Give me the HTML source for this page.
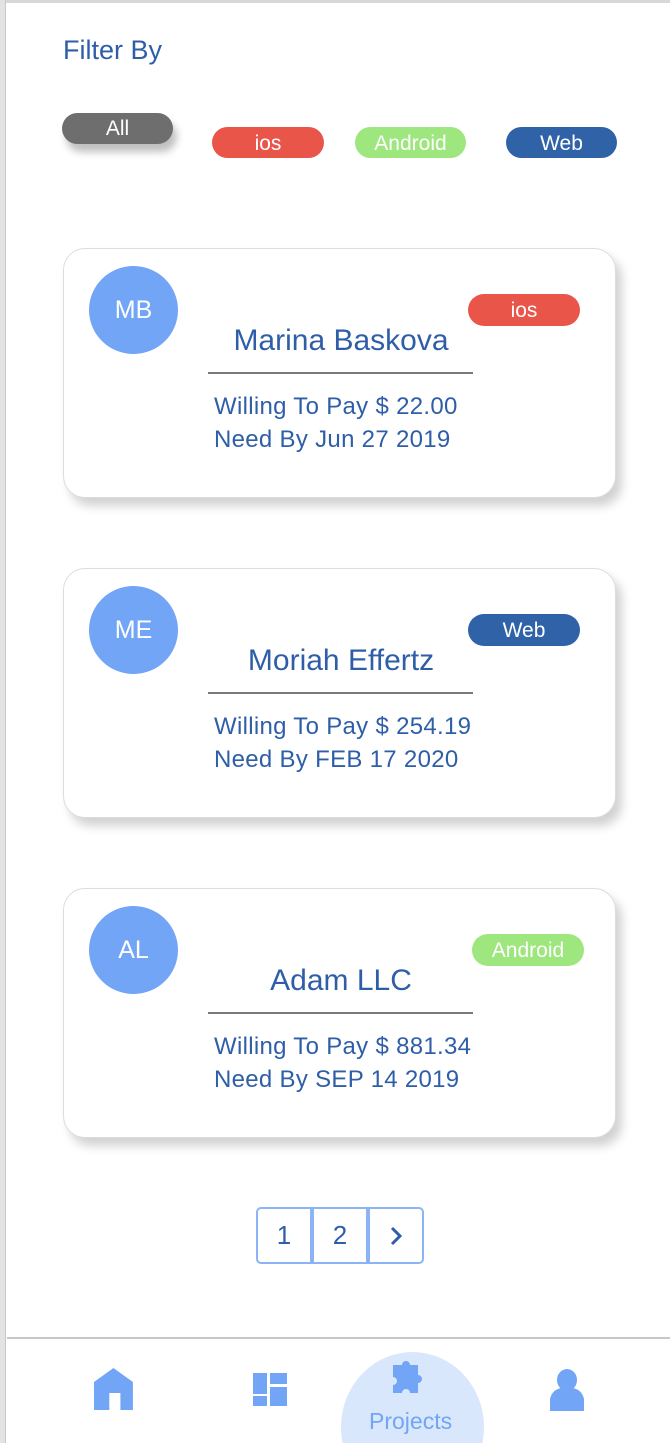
<!DOCTYPE html>
<html style="overflow:hidden;height:1443px"><head><style>
*{margin:0;padding:0;box-sizing:border-box}
body{width:670px;height:1443px;position:relative;background:#fff;font-family:"Liberation Sans",sans-serif;overflow:hidden}
.lb{position:absolute;left:0;top:0;width:6px;height:1443px;background:#e3e3e3;border-right:1px solid #c8c8c8}
.tb{position:absolute;left:0;top:0;width:670px;height:3px;background:#d8d8d8}
.t{position:absolute;white-space:nowrap}
.pill{position:absolute;border-radius:16px;color:#fff;text-align:center;font-size:21px}
.card{position:absolute;left:63px;width:553px;height:250px;border:1px solid #ddd;border-radius:22px;background:#fff;box-shadow:6px 8px 10px rgba(0,0,0,.18)}
.av{position:absolute;left:25px;top:17px;width:89px;height:88px;border-radius:50%;background:#72a5f5;color:#fff;font-size:25px;text-align:center;line-height:88px}
.nm{position:absolute;left:130px;width:294px;text-align:center;font-size:30px;color:#2f5ea8;top:75px}
.ln{position:absolute;left:144px;width:265px;top:123px;height:2px;background:#7a7a7a}
.inf{position:absolute;left:150px;top:141px;font-size:24px;line-height:33px;color:#2f5ea8;white-space:nowrap;letter-spacing:.3px}
.pg{position:absolute;top:1207px;width:56px;height:57px;border:2px solid #8ab4f5;color:#2f5ea8;font-size:26px;text-align:center;line-height:53px}
</style></head><body>
<div class="tb"></div><div class="lb"></div>
<div class="t" style="left:63px;top:35px;font-size:27px;color:#2f5ea8">Filter By</div>
<div class="pill" style="left:62px;top:113px;width:111px;height:31px;line-height:31px;background:#6e6e6e;box-shadow:4px 8px 8px rgba(0,0,0,.25)">All</div>
<div class="pill" style="left:212px;top:127px;width:112px;height:31px;line-height:33px;background:#ea554a">ios</div>
<div class="pill" style="left:355px;top:127px;width:111px;height:31px;line-height:33px;background:#9ee67e">Android</div>
<div class="pill" style="left:506px;top:127px;width:111px;height:31px;line-height:33px;background:#3062a8">Web</div>

<div class="card" style="top:248px"><div class="av">MB</div>
<div class="pill" style="left:404px;top:45px;width:112px;height:32px;line-height:34px;background:#ea554a">ios</div>
<div class="nm">Marina Baskova</div><div class="ln"></div>
<div class="inf">Willing To Pay $ 22.00<br>Need By Jun 27 2019</div></div>

<div class="card" style="top:568px"><div class="av">ME</div>
<div class="pill" style="left:404px;top:45px;width:112px;height:32px;line-height:34px;background:#3062a8">Web</div>
<div class="nm">Moriah Effertz</div><div class="ln"></div>
<div class="inf">Willing To Pay $ 254.19<br>Need By FEB 17 2020</div></div>

<div class="card" style="top:888px"><div class="av">AL</div>
<div class="pill" style="left:408px;top:45px;width:112px;height:32px;line-height:34px;background:#9ee67e">Android</div>
<div class="nm">Adam LLC</div><div class="ln"></div>
<div class="inf">Willing To Pay $ 881.34<br>Need By SEP 14 2019</div></div>

<div class="pg" style="left:256px;border-radius:5px 0 0 5px">1</div>
<div class="pg" style="left:312px">2</div>
<div class="pg" style="left:368px;border-radius:0 5px 5px 0"><svg width="20" height="22" viewBox="0 0 20 22" style="margin-top:16px"><path d="M6 3l8 8-8 8" stroke="#2f5ea8" stroke-width="3" fill="none"/></svg></div>

<div style="position:absolute;left:7px;top:1337px;width:663px;height:2px;background:#c8c8c8"></div>
<div style="position:absolute;left:0;top:1339px;width:670px;height:104px;overflow:hidden">
<div style="position:absolute;left:341px;top:13px;width:143px;height:150px;border-radius:50%;background:#d8e7fc"></div>
<svg style="position:absolute;left:94px;top:29px" width="40" height="43" viewBox="0 0 40 43"><path d="M0 14L14 0 28 14V42H19V25H11V42H0Z" fill="#72a5f5" transform="scale(1.39,1)"/></svg>
<svg style="position:absolute;left:253px;top:34px" width="34" height="34"><rect x="0" y="0" width="14" height="21" fill="#72a5f5"/><rect x="17" y="0" width="17" height="11" fill="#72a5f5"/><rect x="0" y="23" width="14" height="10" fill="#72a5f5"/><rect x="17" y="14" width="17" height="19" fill="#72a5f5"/></svg>
<svg style="position:absolute;left:393px;top:17px" width="44" height="40" viewBox="0 0 44 40"><path d="M0 9h9a4 4 0 1 1 8 0h8v10a4 4 0 1 1 0 8v10h-8a4 4 0 1 0-8 0H0V29a4 4 0 1 0 0-8Z" fill="#72a5f5"/></svg>
<svg style="position:absolute;left:550px;top:30px" width="36" height="42"><ellipse cx="17" cy="11" rx="10" ry="11" fill="#72a5f5"/><path d="M0 42V30Q2 21 11 19H23Q32 21 34 30V42Z" fill="#72a5f5"/></svg>
<div class="t" style="left:369px;top:69px;font-size:23px;color:#72a5f5">Projects</div>
</div>
</body></html>
